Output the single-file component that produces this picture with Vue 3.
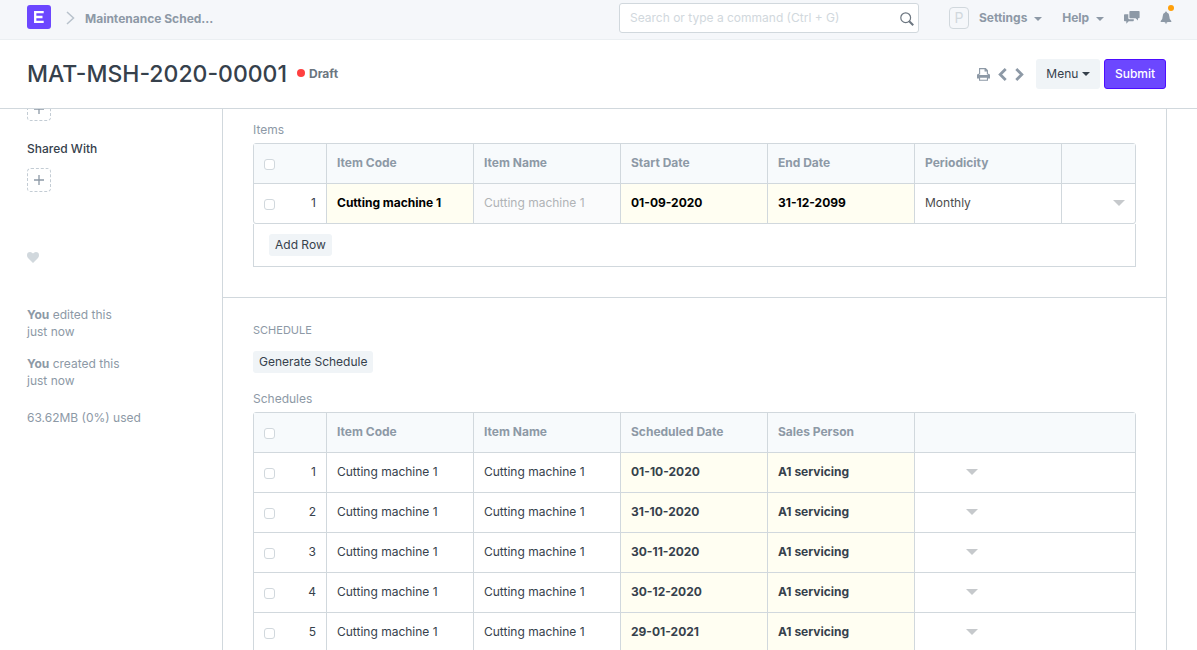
<script setup>
const items = [
  { idx: 1, code: 'Cutting machine 1', name: 'Cutting machine 1', start: '01-09-2020', end: '31-12-2099', period: 'Monthly' },
]
const dates = ['01-10-2020', '31-10-2020', '30-11-2020', '30-12-2020', '29-01-2021']
const schedules = dates.map((date, i) => ({ idx: i + 1, code: 'Cutting machine 1', name: 'Cutting machine 1', date, person: 'A1 servicing' }))
</script>

<template>
  <div class="page">
    <header class="navbar">
      <nav class="crumbs" aria-label="Breadcrumb">
        <a href="#" class="logo" aria-label="Home">
          <svg width="24" height="24" viewBox="0 0 24 24">
            <rect width="24" height="24" rx="3" fill="#6c47ff" />
            <path d="M16.700 7.200H8.200V16.800H16.700M8.200 12H15.500" fill="none" stroke="#fff" stroke-width="2.300" />
          </svg>
        </a>
        <svg class="sep" width="9" height="14" viewBox="0 0 9 14"><path d="M1 1l6.500 6L1 13" fill="none" stroke="#b8c2cc" stroke-width="1.500" /></svg>
        <a href="#" class="crumb">Maintenance Sched...</a>
      </nav>
      <div class="nav-right">
        <div class="search">
          <input type="text" aria-label="Search" placeholder="Search or type a command (Ctrl + G)" />
          <svg width="14" height="14" viewBox="0 0 14 14"><g fill="none" stroke="#6c7680"><circle cx="5.700" cy="5.700" r="4.900" stroke-width="1.200" /><path d="M9.200 9.200l4 4" stroke-width="2" /></g></svg>
        </div>
        <span class="avatar">P</span>
        <button class="nav-btn settings">Settings <i class="caret"></i></button>
        <button class="nav-btn help">Help <i class="caret"></i></button>
        <button class="icon-btn chat" aria-label="Chat">
          <svg width="16" height="13" viewBox="0 0 16 13" fill="#8d99a6"><path d="M6.200 0H14.800q.800 0 .800.800V6.400q0 .800-.800.800H14V9.600L11.600 7.200H6.200q-.800 0-.800-.800V.800q0-.800.800-.800z" /><path d="M.800 3.200H4.300V7.300q0 1 1 1H9.800V9.500q0 .800-.800.800H4.700L2.300 12.700V10.300H.800q-.800 0-.800-.800V4q0-.800.800-.800z" /></svg>
        </button>
        <button class="icon-btn bell" aria-label="Notifications">
          <svg width="12" height="13" viewBox="0 0 12 13" fill="#8d99a6"><path d="M6 .500q.900 0 .900 1Q9.300 2.200 9.300 5.200q0 3.300 2 4.700v1H.700v-1q2-1.400 2-4.700Q2.700 2.200 5.100 1.500q0-1 .900-1z" /><path d="M4.600 11.200h2.800Q7.200 12.500 6 12.500t-1.400-1.300z" /></svg>
          <span class="dot"></span>
        </button>
      </div>
    </header>

    <section class="head">
      <h1>MAT-MSH-2020-00001</h1>
      <span class="status"><i></i>Draft</span>
      <div class="actions">
        <button class="icon-btn" aria-label="Print">
          <svg width="13" height="13" viewBox="0 0 13 13"><path d="M2.600 6.500V.600h5.900l1.900 1.900v4M8.100.600v2.300h2.300" fill="none" stroke="#8d99a6" stroke-width="1.100" /><path fill-rule="evenodd" fill="#8d99a6" d="M1.500 5.700h.600v1.300h8.800V5.700h.600Q13 5.700 13 7.200V10.600h-2v2.200H2v-2.200H0V7.200Q0 5.700 1.500 5.700zM3.100 9.700v2h6.800v-2z" /></svg>
        </button>
        <button class="icon-btn prev" aria-label="Previous">
          <svg width="9" height="13" viewBox="0 0 9 13"><path d="M7.700 1L2.200 6.500l5.500 5.500" fill="none" stroke="#8d99a6" stroke-width="2.800" /></svg>
        </button>
        <button class="icon-btn next" aria-label="Next">
          <svg width="9" height="13" viewBox="0 0 9 13"><path d="M1.300 1l5.500 5.500L1.300 12" fill="none" stroke="#8d99a6" stroke-width="2.800" /></svg>
        </button>
        <button class="btn menu">Menu <i class="caret"></i></button>
        <button class="btn submit">Submit</button>
      </div>
    </section>

    <main class="body">
      <aside class="side">
        <button class="add" aria-label="Add tag"><svg width="10" height="10" viewBox="0 0 10 10"><path d="M5 0v10M0 5h10" stroke="#8d99a6" stroke-width="1.300" /></svg></button>
        <h2>Shared With</h2>
        <button class="add" aria-label="Share"><svg width="10" height="10" viewBox="0 0 10 10"><path d="M5 0v10M0 5h10" stroke="#8d99a6" stroke-width="1.300" /></svg></button>
        <button class="icon-btn like" aria-label="Like"><svg width="12" height="11" viewBox="0 0 12 11"><path d="M6 11L1 6Q0 5 0 3.300 0 0 3.200 0 4.800 0 6 1.600 7.200 0 8.800 0 12 0 12 3.300 12 5 11 6z" fill="#d1d8dd" /></svg></button>
        <p><b>You</b> edited this<br />just now</p>
        <p><b>You</b> created this<br />just now</p>
        <p class="usage">63.62MB (0%) used</p>
      </aside>

      <div class="form">
        <section class="section items">
          <div class="label">Items</div>
          <table>
            <colgroup><col class="c-idx" /><col v-for="n in 5" :key="n" class="c-data" /><col /></colgroup>
            <thead>
              <tr><th><input type="checkbox" aria-label="Select all items" /></th><th>Item Code</th><th>Item Name</th><th>Start Date</th><th>End Date</th><th>Periodicity</th><th></th></tr>
            </thead>
            <tbody>
              <tr v-for="r in items" :key="r.idx">
                <td><div class="idx"><input type="checkbox" :aria-label="'Select item ' + r.idx" /><span>{{ r.idx }}</span></div></td>
                <td class="req dark">{{ r.code }}</td>
                <td class="read">{{ r.name }}</td>
                <td class="req dark">{{ r.start }}</td>
                <td class="req dark">{{ r.end }}</td>
                <td class="plain">{{ r.period }}</td>
                <td><button class="open end" aria-label="Open row"></button></td>
              </tr>
            </tbody>
          </table>
          <div class="foot"><button class="small">Add Row</button></div>
        </section>

        <section class="section schedule">
          <h3>SCHEDULE</h3>
          <button class="small">Generate Schedule</button>
          <div class="label">Schedules</div>
          <table>
            <colgroup><col class="c-idx" /><col v-for="n in 4" :key="n" class="c-data" /><col /></colgroup>
            <thead>
              <tr><th><input type="checkbox" aria-label="Select all schedules" /></th><th>Item Code</th><th>Item Name</th><th>Scheduled Date</th><th>Sales Person</th><th></th></tr>
            </thead>
            <tbody>
              <tr v-for="r in schedules" :key="r.idx">
                <td><div class="idx"><input type="checkbox" :aria-label="'Select schedule ' + r.idx" /><span>{{ r.idx }}</span></div></td>
                <td>{{ r.code }}</td>
                <td>{{ r.name }}</td>
                <td class="req">{{ r.date }}</td>
                <td class="req">{{ r.person }}</td>
                <td><button class="open mid" aria-label="Open row"></button></td>
              </tr>
            </tbody>
          </table>
        </section>
      </div>
    </main>
  </div>
</template>

<style>
body { margin: 0; overflow: hidden; }
</style>

<style scoped>
* { box-sizing: border-box; }
.page { height: 100vh; display: flex; flex-direction: column; background: #fff; color: #36414c; font: 12px/17px Inter, "Liberation Sans", sans-serif; }
button { font: inherit; color: inherit; border: 0; padding: 0; background: none; cursor: pointer; }
svg { display: block; }
h1, h2, h3, p { margin: 0; }
a { text-decoration: none; }

.navbar { flex: none; height: 40px; padding: 0 24px 4px 27px; display: flex; align-items: center; justify-content: space-between; background: #f5f7fa; border-bottom: 1px solid #ebeff2; }
.crumbs { display: flex; align-items: center; }
.logo { margin-bottom: 2px; }
.sep { margin: 0 10px 0 15px; }
.crumb, .nav-btn { color: #8d99a6; font-weight: 700; }
.crumb { padding-top: 2px; }
.nav-right { display: flex; align-items: center; }
.search { position: relative; width: 300px; }
.search input { display: block; width: 100%; height: 30px; padding: 0 30px 0 10px; border: 1px solid #d1d8dd; border-radius: 3px; background: #fff; font: inherit; color: #36414c; outline: 0; }
.search input::placeholder { color: #d1d8dd; opacity: 1; }
.search svg { position: absolute; right: 5px; top: 9px; }
.avatar { width: 20px; height: 22px; margin: 0 10px 0 30px; border: 1px solid #d1d8dd; border-radius: 4px; color: #d1d8dd; font-size: 14px; line-height: 20px; text-align: center; }
.caret { display: inline-block; border: 4px solid transparent; border-top-color: currentColor; border-bottom: 0; vertical-align: middle; }
.nav-btn .caret { margin-left: 4px; }
.help { margin-left: 20px; }
.icon-btn { flex: none; }
.chat { margin-left: 20px; }
.bell { position: relative; margin-left: 20px; margin-right: 1px; }
.dot { position: absolute; right: -2px; top: -6px; width: 6px; height: 6px; border-radius: 50%; background: #ffa00a; }

.head { flex: none; height: 69px; padding: 0 31px 0 27px; display: flex; align-items: center; border-bottom: 1px solid #d1d8dd; }
h1 { font-size: 23px; line-height: 30px; font-weight: 500; }
.status { display: flex; align-items: center; gap: 4px; margin-left: 10px; padding-bottom: 2px; font-weight: 700; color: #6c7680; }
.status i { width: 8px; height: 8px; border-radius: 50%; background: #ff4040; }
.actions { margin-left: auto; display: flex; align-items: center; }
.prev { margin-left: 8px; }
.next { margin-left: 8px; }
.btn { height: 30px; padding-bottom: 2px; border-radius: 3px; }
.menu { width: 64px; margin: 0 4px 0 12px; background: #f0f4f7; }
.submit { width: 62px; border: 1px solid #4d0dff; background: #6c47ff; color: #fff; font-weight: 500; }

.body { flex: 1; min-height: 0; overflow: hidden; display: flex; padding-right: 30px; }
.side { flex: none; width: 222px; padding-left: 27px; display: flex; flex-direction: column; align-items: flex-start; color: #8d99a6; }
.add { flex: none; width: 24px; height: 24px; display: grid; place-items: center; border: 1px dashed #c3ccd4; border-radius: 4px; }
.side > .add:first-child { margin-top: -12px; }
h2 { margin: 19px 0 11px; font-size: 12px; line-height: 17px; font-weight: 500; color: #36414c; }
.like { margin: 60px 0 43px; }
.side p { margin-bottom: 15px; }
.side .usage { margin-top: 5px; }

.form { flex: 1; min-width: 0; align-self: flex-start; border: solid #d1d8dd; border-width: 0 1px; }
.section { padding: 0 30px; }
.items { padding-top: 12px; padding-bottom: 30px; border-bottom: 1px solid #d1d8dd; }
.schedule { padding-top: 24px; }
.label { margin-bottom: 5px; color: #8d99a6; }
h3 { margin-bottom: 12px; font-size: 11px; line-height: 17px; font-weight: 400; color: #8d99a6; }
.small { display: block; height: 22px; padding: 0 6px 2px; border-radius: 3px; background: #f0f4f7; }
.small + .label { margin-top: 17px; }
.foot { padding: 10px 15px; border: 1px solid #d1d8dd; border-top: 0; }

table { width: 100%; table-layout: fixed; border-collapse: separate; border-spacing: 0; border: 1px solid #d1d8dd; border-radius: 3px; }
.c-idx { width: 72px; }
.c-data { width: 147px; }
th, td { height: 40px; padding: 0 10px 2px; text-align: left; border-left: 1px solid #d1d8dd; border-top: 1px solid #d1d8dd; white-space: nowrap; }
th:first-child, td:first-child { border-left: 0; }
thead th { height: 39px; border-top: 0; background: #f7fafc; color: #8d99a6; font-weight: 700; }
.req { background: #fffef2; font-weight: 700; }
.dark { color: #000; }
.read { background: #fafbfc; color: #b0b3b6; }
.plain { color: #4c4c4c; }
.idx { display: flex; align-items: center; justify-content: space-between; }
input[type="checkbox"] { appearance: none; display: block; width: 11px; height: 11px; margin: 4px 0 0; border: 1px solid #d1d8dd; border-radius: 3px; background: #fff; }
.open { display: block; width: 0; height: 0; border: 6px solid transparent; border-top-color: #c6c9cc; border-bottom: 0; }
.end { margin-left: auto; }
.mid { margin-left: 41px; }
</style>
